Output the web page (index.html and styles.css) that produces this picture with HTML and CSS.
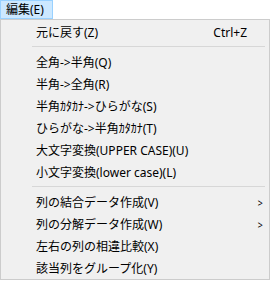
FILE: index.html
```html
<!DOCTYPE html>
<html lang="ja">
<head>
  <meta charset="UTF-8" />
  <title>編集メニュー</title>
  <link rel="stylesheet" href="styles.css">
</head>
<body>
  <div class="menubar">
    <span class="menubar-item active">編集(E)</span>
  </div>

  <div class="menu">
    <div class="menu-item"><span class="label">元に戻す(Z)</span><span class="shortcut">Ctrl+Z</span></div>
    <div class="separator"></div>
    <div class="menu-item"><span class="label">全角-&gt;半角(Q)</span></div>
    <div class="menu-item"><span class="label">半角-&gt;全角(R)</span></div>
    <div class="menu-item"><span class="label">半角ｶﾀｶﾅ-&gt;ひらがな(S)</span></div>
    <div class="menu-item"><span class="label">ひらがな-&gt;半角ｶﾀｶﾅ(T)</span></div>
    <div class="menu-item"><span class="label">大文字変換(UPPER CASE)(U)</span></div>
    <div class="menu-item"><span class="label">小文字変換(lower case)(L)</span></div>
    <div class="separator"></div>
    <div class="menu-item"><span class="label">列の結合データ作成(V)</span><span class="arrow">&gt;</span></div>
    <div class="menu-item"><span class="label">列の分解データ作成(W)</span><span class="arrow">&gt;</span></div>
    <div class="menu-item"><span class="label">左右の列の相違比較(X)</span></div>
    <div class="menu-item"><span class="label">該当列をグループ化(Y)</span></div>
  </div>
</body>
</html>
```

FILE: styles.css
```css
body {
  margin: 0;
  background-color: #ffffff;
  font-family: "Noto Sans", "Noto Sans CJK JP", sans-serif;
  font-size: 12px;
  color: #000;
}

.menubar {
  height: 19px;
  display: flex;
}

.menubar-item {
  box-sizing: border-box;
  height: 19px;
  width: 53px;
  padding: 0 0 0 5px;
  line-height: 17px;
  border: 1px solid transparent;
}

.menubar-item.active {
  background-color: #cce8ff;
  border-color: #99d1ff;
}

.menu {
  box-sizing: border-box;
  width: 270px;
  height: 261px;
  background-color: #f0f0f0;
  border: 1px solid #cccccc;
  padding: 1px 2px;
}

.menu-item {
  height: 22px;
  display: flex;
  align-items: center;
  padding-left: 33px;
  padding-right: 8px;
}

.label {
  flex: 1;
  white-space: nowrap;
}

.shortcut {
  padding-right: 12px;
}

.arrow {
  font-size: 11px;
  padding-right: 0;
  margin-right: -4px;
  transform: scaleX(0.8);
}

.separator {
  height: 1px;
  background-color: #d7d7d7;
  margin: 3px 2px 4px 29px;
}
```
